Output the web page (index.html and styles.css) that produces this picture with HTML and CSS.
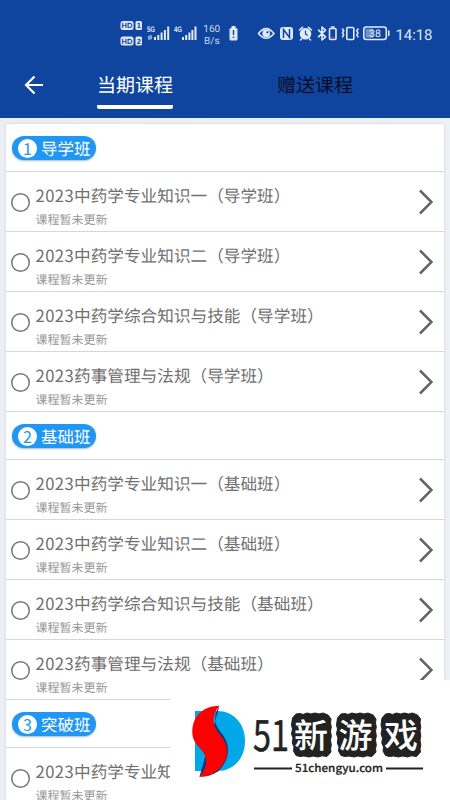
FILE: index.html
```html
<!DOCTYPE html>
<html lang="zh-CN">
<head>
<meta charset="utf-8">
<title>当期课程</title>
<link rel="stylesheet" href="styles.css">
</head>
<body>
<div class="screen">
  <header class="header">
    <div class="status">
      <svg class="status-icons" width="450" height="60" viewBox="0 0 450 60">
        <g fill="#dfeafc">
          <rect x="120.500" y="21" width="13" height="9" rx="2.500"/><rect x="135.500" y="21" width="6.500" height="9" rx="1.500"/>
          <rect x="120.500" y="36.500" width="13" height="9" rx="2.500"/><rect x="135.500" y="36.500" width="6.500" height="9" rx="1.500"/>
          <path d="M154 37h2v3h-2zM157.300 35h2v5h-2zM160.600 32.500h2v7.500h-2zM163.900 30h2v10h-2zM167.200 26.500h2v13.500h-2z"/>
          <path d="M182 37h2v3h-2zM185.200 35h2v5h-2zM188.400 32.500h2v7.500h-2zM191.400 30h2v10h-2zM194.500 26.500h2v13.500h-2z"/>
          <path d="M147.500 37.500l2-2.500v5h-1v-2.500zM150.500 35h1v2.500h1l-2 2.500z"/>
          <rect x="229.500" y="28" width="8" height="12.500" rx="1.500"/><rect x="231.500" y="26" width="4" height="3"/>
          <rect x="280" y="27" width="13" height="13" rx="3"/>
          <circle cx="305.500" cy="33.800" r="5.800"/>
        </g>
        <g class="hd-label" text-anchor="middle">
          <text x="127" y="28.300">HD</text><text x="138.800" y="28.300">1</text>
          <text x="127" y="43.800">HD</text><text x="138.800" y="43.800">2</text>
        </g>
        <g class="net-label"><text x="147" y="32" textLength="8" lengthAdjust="spacingAndGlyphs">5G</text><text x="174" y="32" textLength="8" lengthAdjust="spacingAndGlyphs">4G</text></g>
        <path d="M233.500 30v5M233.500 36.500v1.500" stroke="#10459f" stroke-width="1.400"/>
        <g fill="none" stroke="#dfeafc" stroke-width="1.600" stroke-linecap="round" stroke-linejoin="round">
          <path d="M258.500 33.500Q266 23.800 274 33.500Q266 43 258.500 33.500z"/>
          <path d="M299.500 30l3-2.700M311.500 30l-3-2.700M301.500 39l-1 1M309.500 39l1 1"/>
          <path d="M318.500 30.200l7 6.600l-3.500 3.200v-13l3.500 3.200l-7 6.600"/>
          <rect x="329.500" y="28.500" width="6.500" height="11" rx="1"/><path d="M331.500 27h2.500"/>
          <rect x="346.800" y="27.500" width="7" height="12" rx="1"/>
          <path d="M342.500 29l1.200 1.800l-1.200 2l1.200 2l-1.200 2M358 29l-1.200 1.800l1.200 2l-1.200 2l1.200 2"/>
          <rect x="363.800" y="27" width="22.500" height="12.500" rx="2.500"/><path d="M388.800 31v4.500"/>
        </g>
        <circle cx="266.200" cy="33.400" r="3.800" fill="#dfeafc"/><circle cx="267.400" cy="32.300" r="1.100" fill="#10459f"/>
        <path d="M283.500 38v-8.500l6 8v-8.500" fill="none" stroke="#10459f" stroke-width="1.500"/>
        <path d="M305.500 30.500v3.500l2.300 1.500" fill="none" stroke="#10459f" stroke-width="1.200"/>
        <path d="M331 37.800h3.500" stroke="#b35a70" stroke-width="1.200"/>
        <rect x="365.500" y="28.700" width="7.500" height="9" fill="#6f92cc"/>
        <text class="battery-label" x="375" y="37.200" text-anchor="middle">38</text>
        <g class="speed-label" text-anchor="middle"><text x="211.800" y="31.500">160</text><text x="211.800" y="43.500">B/s</text></g>
        <text class="clock" x="395.500" y="39.800" textLength="37">14:18</text>
      </svg>
    </div>
    <nav class="tabs">
      <svg class="back" width="20" height="20" viewBox="0 0 20 20"><path d="M19 10H2M10.500 1.500L2 10l8.500 8.500" fill="none" stroke="#fff" stroke-width="2.200"/></svg>
      <div class="tab tab-active">当期课程</div>
      <div class="tab tab-gift">赠送课程</div>
    </nav>
  </header>
  <main class="card">
    <div class="section"><span class="pill"><b class="num">1</b>导学班</span></div>
    <div class="item"><i class="radio"></i><div class="info"><p class="title"><span class="year">2023</span>中药学专业知识一（导学班）</p><p class="sub">课程暂未更新</p></div><svg class="arrow" viewBox="0 0 14 26"><path d="M1 1.500L12.500 13L1 24.500"/></svg></div>
    <div class="item"><i class="radio"></i><div class="info"><p class="title"><span class="year">2023</span>中药学专业知识二（导学班）</p><p class="sub">课程暂未更新</p></div><svg class="arrow" viewBox="0 0 14 26"><path d="M1 1.500L12.500 13L1 24.500"/></svg></div>
    <div class="item"><i class="radio"></i><div class="info"><p class="title"><span class="year">2023</span>中药学综合知识与技能（导学班）</p><p class="sub">课程暂未更新</p></div><svg class="arrow" viewBox="0 0 14 26"><path d="M1 1.500L12.500 13L1 24.500"/></svg></div>
    <div class="item"><i class="radio"></i><div class="info"><p class="title"><span class="year">2023</span>药事管理与法规（导学班）</p><p class="sub">课程暂未更新</p></div><svg class="arrow" viewBox="0 0 14 26"><path d="M1 1.500L12.500 13L1 24.500"/></svg></div>
    <div class="section"><span class="pill"><b class="num">2</b>基础班</span></div>
    <div class="item"><i class="radio"></i><div class="info"><p class="title"><span class="year">2023</span>中药学专业知识一（基础班）</p><p class="sub">课程暂未更新</p></div><svg class="arrow" viewBox="0 0 14 26"><path d="M1 1.500L12.500 13L1 24.500"/></svg></div>
    <div class="item"><i class="radio"></i><div class="info"><p class="title"><span class="year">2023</span>中药学专业知识二（基础班）</p><p class="sub">课程暂未更新</p></div><svg class="arrow" viewBox="0 0 14 26"><path d="M1 1.500L12.500 13L1 24.500"/></svg></div>
    <div class="item"><i class="radio"></i><div class="info"><p class="title"><span class="year">2023</span>中药学综合知识与技能（基础班）</p><p class="sub">课程暂未更新</p></div><svg class="arrow" viewBox="0 0 14 26"><path d="M1 1.500L12.500 13L1 24.500"/></svg></div>
    <div class="item"><i class="radio"></i><div class="info"><p class="title"><span class="year">2023</span>药事管理与法规（基础班）</p><p class="sub">课程暂未更新</p></div><svg class="arrow" viewBox="0 0 14 26"><path d="M1 1.500L12.500 13L1 24.500"/></svg></div>
    <div class="section"><span class="pill"><b class="num">3</b>突破班</span></div>
    <div class="item"><i class="radio"></i><div class="info"><p class="title"><span class="year">2023</span>中药学专业知</p><p class="sub">课程暂未更新</p></div></div>
  </main>
  <aside class="brand">
    <svg width="280" height="120" viewBox="0 0 280 120">
      <path d="M25 31H47C64 31 75 44 75 61C75 78 64 91 47 91H25z" fill="#00a8e8"/>
      <path d="M49.500 26C41 38 46 47 53 55C62 68 58 82 48 91.500C43 95 36 97 29.500 96.500z" fill="#123a7c"/>
      <path d="M49.500 25.800C40 37 43 47 50 55C61 67 59 81 46.500 91C42 95 36 97 29.300 96.700C38 88 38 78 32 70.500C25 63 22 59 22.300 51C23 35 34 26 49.500 25.800z" fill="#f00"/>
      <g fill="#222" stroke="#222" stroke-width="1" stroke-linejoin="round">
        <path id="stamp" d="M126 34L130 33.500L133 34.500L137 33L141 34L145 33L149 34L153 33L158 35L161 39L160.500 43L161.300 47L160.500 51L161.300 56L160.500 60L161.300 65L160.500 69L161 72L157 76.500L152 75.800L148 77L143 76L139 77L134 76L130 76.500L126 75.500L123.500 71L124 67L122.300 63L123 58L121.500 54L122.500 49L121.500 45L122.500 38z"/>
        <use href="#stamp" x="45"/>
        <use href="#stamp" x="89.500"/>
      </g>
      <text class="brand-number" x="83" y="71" textLength="36" lengthAdjust="spacingAndGlyphs">51</text>
      <g class="brand-name" text-anchor="middle"><text x="141" y="68">新</text><text x="185.500" y="68">游</text><text x="231" y="68">戏</text></g>
      <path d="M84 88.500H122M216 88.500H253" stroke="#222" stroke-width="2.200"/>
      <text class="brand-url" x="125" y="92" textLength="88" lengthAdjust="spacingAndGlyphs">51chengyu.com</text>
    </svg>
  </aside>
</div>
</body>
</html>
```
FILE: styles.css
```css
* { box-sizing: border-box; }
body { margin: 0; font-family: "Noto Sans CJK SC", sans-serif; text-rendering: geometricPrecision; }
p { margin: 0; }
.screen { position: relative; width: 450px; height: 800px; overflow: hidden; background: linear-gradient(90deg, #ebeef5, #ebf2f6); }
.header { height: 118px; background: #10459f; }
.status { height: 60px; }
.status-icons { display: block; }
.hd-label { font: bold 7.5px "Liberation Sans", sans-serif; fill: #10459f; }
.net-label { font: bold 8px "Liberation Sans", sans-serif; fill: #dfeafc; }
.battery-label { font: 10.5px Roboto, sans-serif; fill: #e8f0ff; }
.speed-label { font: 10px Roboto, sans-serif; fill: #c7d7f2; }
.clock { font: 15px Roboto, sans-serif; fill: #dce8fb; }
.tabs { display: flex; height: 58px; padding-left: 24px; }
.back { margin-top: 15px; }
.tab { width: 76px; height: 49px; font-size: 19px; line-height: 50px; white-space: nowrap; }
.tab-active { margin-left: 53px; color: #fff; border-bottom: 4px solid #fff; border-radius: 0 0 2px 2px; }
.tab-gift { margin-left: 104px; color: #050e28; }
.card { width: 438px; height: 690px; margin: 6px 0 0 6px; background: #fff; border-radius: 2px 2px 0 0; box-shadow: 0 0 3px #cbd0d8; }
.section { display: flex; align-items: center; height: 48px; padding-left: 6px; border-bottom: 1px solid #d6d7da; }
.pill { display: flex; align-items: center; gap: 4px; width: 84px; height: 24px; margin-top: 1px; padding-left: 6px; border-radius: 12px; background: #2196f3; box-shadow: 0 1px 2px #aeb9c5; color: #fff; font-size: 16.5px; line-height: 24px; white-space: nowrap; }
.num { width: 19px; height: 19px; border-radius: 50%; background: #fff; color: #2196f3; font-size: 16px; font-weight: 400; line-height: 19px; text-align: center; }
.item { display: flex; align-items: center; height: 60px; padding: 0 11px 0 5px; border-bottom: 1px solid #d6d7da; }
.radio { flex: none; width: 19px; height: 19px; margin-top: 2px; box-shadow: inset 0 0 0 1.5px #757575; border-radius: 50%; }
.info { flex: 1; height: 59px; margin-left: 5.5px; padding-top: 11px; white-space: nowrap; }
.title { color: #707070; font-size: 16.650px; line-height: 24px; }
.year { letter-spacing: .4px; }
.sub { margin-top: 4px; color: #999; font-size: 12px; line-height: 18px; }
.arrow { flex: none; width: 14px; height: 26px; fill: none; stroke: #656565; stroke-width: 2.500; }
.brand { position: absolute; left: 170px; top: 680px; width: 280px; height: 120px; background: #fff; }
.brand-number { font-size: 42px; font-weight: 400; fill: #222; stroke: #222; stroke-width: .5px; }
.brand-name { font-size: 34px; font-weight: 500; fill: #fff; }
.brand-url { font-family: "Noto Sans CJK SC", sans-serif; font-size: 11px; font-weight: 500; fill: #222; stroke: #222; stroke-width: .2px; }
```
